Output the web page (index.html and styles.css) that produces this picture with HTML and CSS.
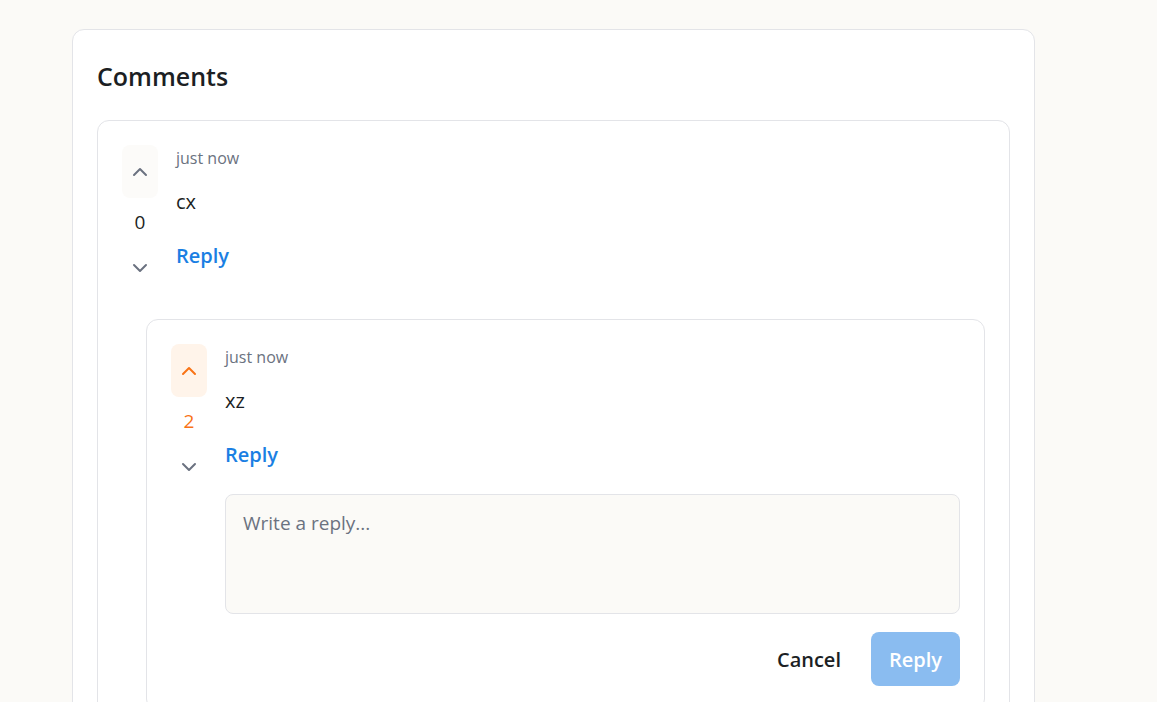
FILE: index.html
```html
<!DOCTYPE html>
<html lang="en">
<head>
<meta charset="utf-8">
<title>Comments</title>
<link rel="stylesheet" href="styles.css">
</head>
<body>
<section class="panel">
  <h2 class="panel-title">Comments</h2>
  <article class="comment">
    <div class="comment-row">
      <div class="vote">
        <button class="vote-btn up" aria-label="Upvote">
          <svg width="24" height="24" viewBox="0 0 24 24" fill="none" stroke="currentColor" stroke-width="2" stroke-linecap="round" stroke-linejoin="round"><path d="m6 15 6-6 6 6"/></svg>
        </button>
        <span class="vote-count">0</span>
        <button class="vote-btn down" aria-label="Downvote">
          <svg width="24" height="24" viewBox="0 0 24 24" fill="none" stroke="currentColor" stroke-width="2" stroke-linecap="round" stroke-linejoin="round"><path d="m6 9 6 6 6-6"/></svg>
        </button>
      </div>
      <div class="comment-body">
        <div class="meta">just now</div>
        <p class="text">cx</p>
        <button class="reply-link">Reply</button>
      </div>
    </div>
    <div class="replies">
      <article class="comment">
        <div class="comment-row">
          <div class="vote">
            <button class="vote-btn up active" aria-label="Upvote">
              <svg width="24" height="24" viewBox="0 0 24 24" fill="none" stroke="currentColor" stroke-width="2" stroke-linecap="round" stroke-linejoin="round"><path d="m6 15 6-6 6 6"/></svg>
            </button>
            <span class="vote-count active">2</span>
            <button class="vote-btn down" aria-label="Downvote">
              <svg width="24" height="24" viewBox="0 0 24 24" fill="none" stroke="currentColor" stroke-width="2" stroke-linecap="round" stroke-linejoin="round"><path d="m6 9 6 6 6-6"/></svg>
            </button>
          </div>
          <div class="comment-body">
            <div class="meta">just now</div>
            <p class="text">xz</p>
            <button class="reply-link">Reply</button>
            <form class="reply-form">
              <textarea class="reply-input" placeholder="Write a reply..."></textarea>
              <div class="form-actions">
                <button type="button" class="btn-cancel">Cancel</button>
                <button type="button" class="btn-submit" disabled>Reply</button>
              </div>
            </form>
          </div>
        </div>
      </article>
    </div>
  </article>
</section>
</body>
</html>
```

FILE: styles.css
```css
* { box-sizing: border-box; }

html, body {
  margin: 0;
  padding: 0;
  background: #fbfaf7;
  font-family: "Segoe UI", "Open Sans", "Noto Sans", sans-serif;
  color: #1f2329;
}

body {
  overflow: hidden;
  height: 702px;
}

.panel {
  width: 963px;
  margin: 29px 0 0 72px;
  background: #ffffff;
  border: 1px solid #e3e4e8;
  border-radius: 12px;
  padding: 28px 24px 24px 24px;
}

.panel-title {
  margin: 0 0 26px 0;
  font-size: 25px;
  line-height: 36px;
  font-weight: 600;
  color: #1c1f24;
}

.comment {
  border: 1px solid #e3e4e8;
  border-radius: 12px;
  padding: 24px;
  background: #ffffff;
}

.comment-row {
  display: flex;
  gap: 18px;
}

.vote {
  display: flex;
  flex-direction: column;
  align-items: center;
  width: 36px;
  flex: none;
}

.vote-btn {
  width: 36px;
  height: 53px;
  border: none;
  border-radius: 8px;
  background: transparent;
  color: #6b7280;
  display: flex;
  align-items: center;
  justify-content: center;
  padding: 0;
  cursor: pointer;
}

.vote-btn svg { display: block; width: 24px; height: 24px; }

.vote-btn.up { background: #fcfbf9; }
.vote-btn.up.active { background: #fff4ea; color: #f97316; }

.vote-count {
  padding: 12px 0 7px;
  font-size: 19px;
  line-height: 24px;
  font-weight: 500;
  color: #1c1f24;
}
.vote-count.active { color: #f97316; }

.comment-body {
  flex: 1;
  min-width: 0;
  display: flex;
  flex-direction: column;
  align-items: flex-start;
}

.meta {
  margin-top: 1px;
  font-size: 16px;
  line-height: 24px;
  color: #6b7280;
}

.text {
  margin: 18px 0 0;
  font-size: 20px;
  line-height: 28px;
  color: #1c1f24;
}

.reply-link {
  margin-top: 26px;
  padding: 0;
  border: none;
  background: none;
  font-family: inherit;
  font-size: 20px;
  line-height: 28px;
  font-weight: 600;
  color: #1b7fe3;
  cursor: pointer;
}

.replies {
  margin: 25px 0 0 24px;
}

.reply-form {
  align-self: stretch;
  margin-top: 25px;
  display: flex;
  flex-direction: column;
  gap: 18px;
}

.reply-input {
  display: block;
  width: 100%;
  height: 120px;
  resize: none;
  border: 1px solid #e3e4e8;
  border-radius: 8px;
  background: #fbfaf7;
  padding: 14px 17px;
  font-family: inherit;
  font-size: 19px;
  line-height: 28px;
  color: #1c1f24;
}
.reply-input::placeholder { color: #6b7280; }

.form-actions {
  display: flex;
  justify-content: flex-end;
  gap: 12px;
}

.btn-cancel,
.btn-submit {
  height: 54px;
  padding: 0 18px;
  border: none;
  border-radius: 8px;
  font-family: inherit;
  font-size: 20px;
  font-weight: 600;
  cursor: pointer;
}

.btn-cancel {
  background: transparent;
  color: #1c1f24;
}

.btn-submit {
  background: #8abcf0;
  color: #ffffff;
}
```
